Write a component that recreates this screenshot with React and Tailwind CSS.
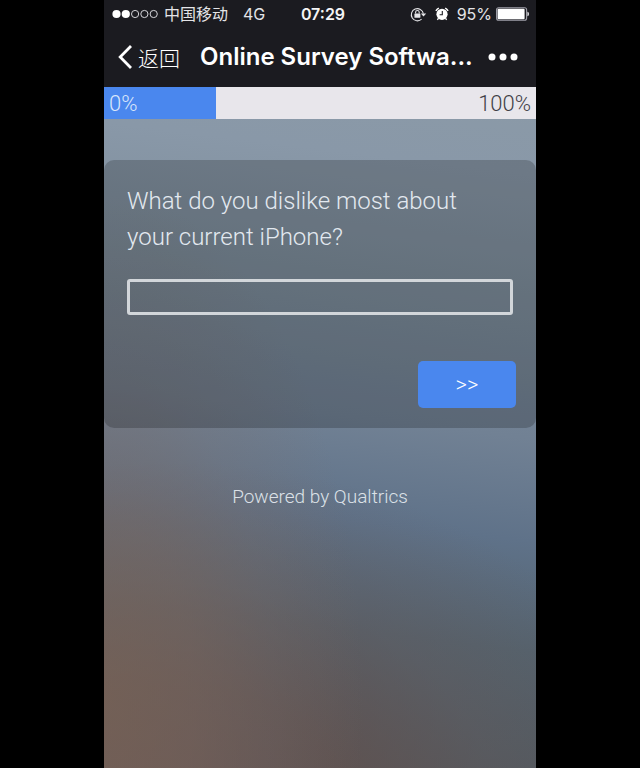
import React from "react";

function SignalDots() {
  return (
    <svg width="47" height="10" viewBox="0 0 47 10" role="img" aria-label="Signal strength">
      <circle cx="4.5" cy="5" r="4.1" fill="#fff" />
      <circle cx="13.8" cy="5" r="4.1" fill="#fff" />
      <g fill="none" stroke="#d4d4d8" strokeWidth="1">
        <circle cx="23.1" cy="5" r="3.6" />
        <circle cx="32.4" cy="5" r="3.6" />
        <circle cx="41.7" cy="5" r="3.6" />
      </g>
    </svg>
  );
}

function RotationLock() {
  return (
    <svg width="17" height="15" viewBox="0 0 17 15" aria-hidden="true">
      <path d="M13.4 6.6 A6.1 6.1 0 1 0 11.6 12.2" fill="none" stroke="#e4e4e7" strokeWidth="1.1" />
      <path d="M10.8 6.4 H16.2 L13.5 9.4 Z" fill="#e4e4e7" />
      <rect x="4.4" y="6.4" width="6" height="4.4" rx="0.6" fill="#e4e4e7" />
      <path d="M5.6 6.6 V5.3 a1.8 1.8 0 0 1 3.6 0 V6.6" fill="none" stroke="#e4e4e7" strokeWidth="1.1" />
    </svg>
  );
}

function AlarmClock() {
  return (
    <svg width="14" height="14" viewBox="0 0 14 14" aria-hidden="true">
      <circle cx="7" cy="7.3" r="5.6" fill="#fff" />
      <path d="M0.9 3.8 A8 8 0 0 1 3.8 1.1 M10.2 1.1 A8 8 0 0 1 13.1 3.8" fill="none" stroke="#fff" strokeWidth="1.5" />
      <path d="M3.4 11.4 L2.4 12.9 M10.6 11.4 L11.6 12.9" stroke="#fff" strokeWidth="1.3" />
      <path d="M7.3 4 V7.8 H4.6" fill="none" stroke="#1b1b20" strokeWidth="1.1" />
    </svg>
  );
}

function Battery() {
  return (
    <svg width="34" height="14" viewBox="0 0 34 14" role="img" aria-label="Battery">
      <rect x="0.6" y="0.8" width="30" height="12.4" rx="2" fill="none" stroke="#a1a1aa" strokeWidth="1.1" />
      <rect x="1.6" y="1.8" width="27" height="10.4" rx="1" fill="#fff" />
      <path d="M31.4 4.8 C33.6 5 33.6 9 31.4 9.2 Z" fill="#d4d4d8" />
    </svg>
  );
}

function StatusBar() {
  return (
    <div className="grid h-7 grid-cols-[1fr_auto_1fr] items-center pr-1.5 pl-2 font-['Inter','Noto_Sans_CJK_SC',sans-serif] text-base leading-7 text-zinc-200">
      <div className="flex items-center">
        <SignalDots />
        <span className="ml-[5px]">中国移动</span>
        <span className="ml-[15px]">4G</span>
      </div>
      <time className="pl-1 font-semibold text-zinc-100">07:29</time>
      <div className="flex items-center justify-end">
        <RotationLock />
        <span className="ml-2">
          <AlarmClock />
        </span>
        <span className="ml-2">95%</span>
        <span className="ml-1">
          <Battery />
        </span>
      </div>
    </div>
  );
}

function NavBar() {
  return (
    <header className="flex h-[59px] items-center px-3.5 pb-0.5 text-white">
      <button type="button" className="flex items-center font-['Noto_Sans_CJK_SC',sans-serif] text-[21px] leading-8">
        <svg width="15" height="26" viewBox="0 0 15 26" aria-hidden="true">
          <path d="M13 2 L2.2 13 L13 24" fill="none" stroke="#fff" strokeWidth="2.8" />
        </svg>
        <span className="ml-[5px] font-light">返回</span>
      </button>
      <h1 className="ml-5 min-w-0 flex-1 font-['Inter',sans-serif] text-2xl leading-8 font-semibold whitespace-nowrap">
        Online Survey Softwa...
      </h1>
      <button type="button" aria-label="More" className="mr-1">
        <svg width="30" height="8" viewBox="0 0 30 8" fill="#fff" aria-hidden="true">
          <circle cx="4" cy="4" r="3.5" />
          <circle cx="15" cy="4" r="3.5" />
          <circle cx="26" cy="4" r="3.5" />
        </svg>
      </button>
    </header>
  );
}

function ProgressBar() {
  return (
    <div
      role="progressbar"
      aria-label="Survey progress"
      className="flex h-8 bg-[#e8e6eb] text-[22px] leading-[34px] font-light"
    >
      <div className="w-[26%] bg-[#4a87ee] pl-[5px] text-[#d9e6fb]">0%</div>
      <div className="flex-1 pr-[5px] text-right text-[#3f3f46]">100%</div>
    </div>
  );
}

export default function App() {
  return (
    <div className="min-h-screen bg-black font-['Roboto',sans-serif]">
      <div className="mx-auto flex min-h-screen w-full max-w-[432px] flex-col bg-[#1b1b20]">
        <StatusBar />
        <NavBar />
        <main className="flex flex-1 flex-col bg-[radial-gradient(ellipse_60%_75%_at_0%_90%,#7b6558b3_0%,#7b685f88_35%,#7b6e6a44_65%,#7b6e6a00_100%),radial-gradient(ellipse_115%_50%_at_15%_105%,#654e4acc_0%,#65504bb3_35%,#66585866_65%,#66606800_100%),linear-gradient(187deg,#8b9aa7_0%,#8998a8_12%,#7d8d9b_30%,#718194_48%,#5f7289_62%,#53636f_77%,#4d565c_100%)]">
          <ProgressBar />
          <form
            className="mt-[41px] rounded-[10px] bg-black/20 px-[23px] pt-[23px] pb-5"
            onSubmit={(e) => e.preventDefault()}
          >
            <label htmlFor="answer" className="block max-w-[350px] text-2xl leading-9 font-light text-[#e3e9f0]">
              What do you dislike most about your current iPhone?
            </label>
            <input
              id="answer"
              type="text"
              className="mt-6 block h-9 w-full rounded-[3px] border-[3px] border-[#d2d6da] bg-transparent px-2 text-lg text-white outline-none"
            />
            <div className="-mr-[3px] mt-[46px] flex justify-end">
              <button type="submit" className="h-[47px] w-[98px] rounded-[5px] bg-[#4a87ee] text-[22px] font-light text-white">
                &gt;&gt;
              </button>
            </div>
          </form>
          <footer className="mt-[55px] text-center text-[19px] leading-7 font-light text-[#dce1e7]">
            <a href="#qualtrics">Powered by Qualtrics</a>
          </footer>
        </main>
      </div>
    </div>
  );
}
